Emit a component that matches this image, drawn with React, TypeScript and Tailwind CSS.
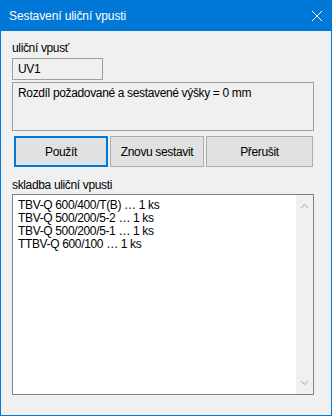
import React from "react";

const items = [
  "TBV-Q 600/400/T(B) … 1 ks",
  "TBV-Q 500/200/5-2 … 1 ks",
  "TBV-Q 500/200/5-1 … 1 ks",
  "TTBV-Q 600/100 … 1 ks",
];

const font = { fontFamily: '"Segoe UI", "Liberation Sans", Arial, sans-serif' };

const Chevron = ({ up }: { up?: boolean }) => (
  <svg width="9" height="6" viewBox="0 0 9 6" className="block">
    <path
      d={up ? "M1 5 L4.5 1.5 L8 5" : "M1 1 L4.5 4.5 L8 1"}
      fill="none"
      stroke="#c2c2c2"
      strokeWidth="1.2"
    />
  </svg>
);

export default function App() {
  return (
    <div
      className="w-[332px] h-[416px] flex flex-col bg-[#0078d7] border border-[#0078d7] text-[12px] tracking-[-0.35px] text-black"
      style={font}
    >
      <div className="h-[30px] shrink-0 flex items-center justify-between pl-[8px] pr-[8px] text-white">
        <span className="text-[12px] tracking-[-0.1px]">Sestavení uliční vpusti</span>
        <svg width="12" height="12" viewBox="0 0 12 12">
          <path d="M1 1 L11 11 M11 1 L1 11" stroke="#ffffff" strokeWidth="1" />
        </svg>
      </div>
      <div className="flex-1 bg-[#f0f0f0] flex flex-col pl-[11px] pr-[17px] pt-[10px]">
        <div className="h-[14px] leading-[14px]">uliční vpusť</div>
        <div className="mt-[3px] w-[91px] h-[22px] border border-[#a0a0a0] pl-[5px] leading-[20px]">
          UV1
        </div>
        <div className="mt-[2px] h-[49px] border border-[#a0a0a0] pl-[5px] pt-[3px] leading-[14px]">
          Rozdíl požadované a sestavené výšky = 0 mm
        </div>
        <div className="mt-[5px] flex gap-[2px] pl-[2px] h-[31px]">
          <button className="w-[94px] border-2 border-[#0078d7] bg-[#e1e1e1]">Použít</button>
          <button className="w-[94px] border border-[#adadad] bg-[#e1e1e1]">Znovu sestavit</button>
          <button className="w-[107px] border border-[#adadad] bg-[#e1e1e1]">Přerušit</button>
        </div>
        <div className="mt-[11px] h-[14px] leading-[14px]">skladba uliční vpusti</div>
        <div className="mt-[2px] h-[201px] border border-[#828282] bg-white flex">
          <div className="flex-1 pl-[5px] pt-[4px] leading-[13px]">
            {items.map((t) => (
              <div key={t}>{t}</div>
            ))}
          </div>
          <div className="w-[17px] bg-[#f0f0f0] flex flex-col items-center justify-between py-[8px]">
            <Chevron up />
            <Chevron />
          </div>
        </div>
      </div>
    </div>
  );
}
